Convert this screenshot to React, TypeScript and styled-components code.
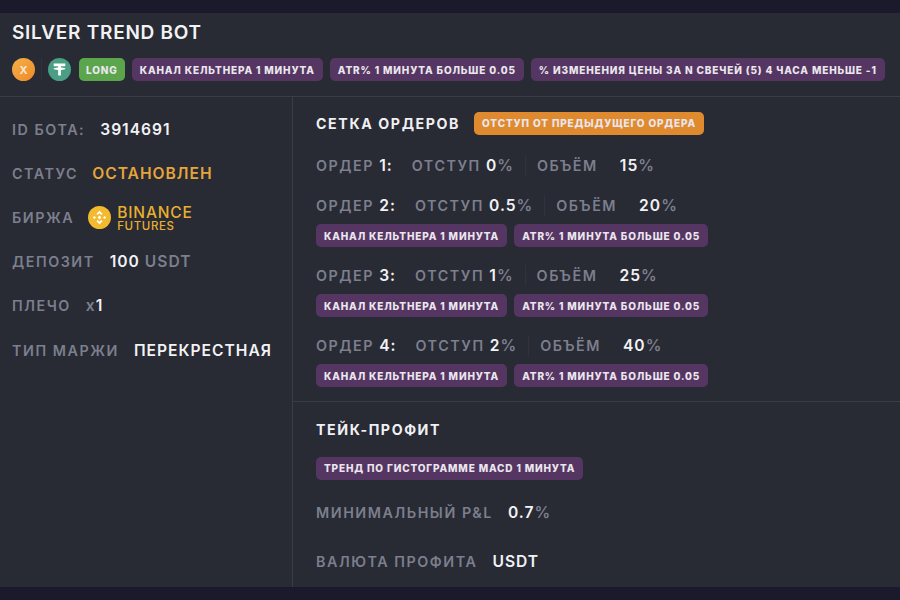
import React from "react";
import styled, { createGlobalStyle } from "styled-components";

const Global = createGlobalStyle`
  html, body { margin: 0; padding: 0; background: #1b1a2c; }
  body { font-family: Inter, "Noto Sans", sans-serif; }
`;

const Page = styled.div`
  width: 900px;
  height: 600px;
  box-sizing: border-box;
  padding: 13px 0 13px;
  overflow: hidden;
`;
const Card = styled.div`
  height: 574px;
  background: #282a34;
  display: flex;
  flex-direction: column;
`;
const Header = styled.div`
  height: 84px;
  box-sizing: border-box;
  padding: 9px 12px 0;
  border-bottom: 1px solid #3a3c47;
`;
const Title = styled.div`
  font-size: 19px;
  line-height: 22px;
  font-weight: 600;
  color: #f2f2f4;
  letter-spacing: 0.75px;
`;
const BadgeRow = styled.div`
  display: flex;
  align-items: center;
  margin-top: 14px;
`;
const Coin = styled.span<{ $bg: string }>`
  width: 23px;
  height: 23px;
  border-radius: 50%;
  background: ${(p) => p.$bg};
  display: flex;
  align-items: center;
  justify-content: center;
  color: #f7e6d0;
  font-size: 11px;
  font-weight: 700;
  flex: none;
`;
const VLine = styled.span`
  width: 1px;
  height: 23px;
  background: #30323d;
  margin: 0 6px;
  flex: none;
`;
const Tag = styled.span<{ $bg?: string }>`
  display: inline-flex;
  align-items: center;
  height: 23px;
  box-sizing: border-box;
  padding: 0 8px;
  border-radius: 5px;
  background: ${(p) => p.$bg ?? "#553662"};
  color: #ebe6ee;
  font-size: 10px;
  font-weight: 800;
  letter-spacing: 0.85px;
  white-space: nowrap;
  flex: none;
`;
const LongTag = styled(Tag)`
  padding: 0 7px;
`;
const HeaderTags = styled.div`
  display: flex;
  gap: 7px;
  margin-left: 8px;
`;
const OrangeTag = styled(Tag)`
  margin-left: 14px;
`;
const Body = styled.div`
  flex: 1;
  display: flex;
  min-height: 0;
`;
const Left = styled.div`
  width: 293px;
  box-sizing: border-box;
  border-right: 1px solid #3a3c47;
  padding: 21px 12px 0;
  flex: none;
`;
const LeftRow = styled.div<{ $h: number }>`
  height: ${(p) => p.$h}px;
  display: flex;
  align-items: center;
  white-space: nowrap;
`;
const Label = styled.span<{ $mr?: number }>`
  font-size: 14.3px;
  font-weight: 600;
  letter-spacing: 1.55px;
  color: #7c7f8d;
  margin-right: ${(p) => p.$mr ?? 0}px;
  white-space: nowrap;
`;
const Value = styled.span<{ $color?: string }>`
  font-size: 15.6px;
  font-weight: 600;
  letter-spacing: 1px;
  color: ${(p) => p.$color ?? "#f2f2f4"};
  white-space: nowrap;
`;
const Unit = styled.span`
  color: #7c7f8d;
  font-weight: 600;
`;
const Exchange = styled.span`
  display: flex;
  flex-direction: column;
  margin-left: 6px;
  padding-top: 4px;
  color: #e9b02f;
`;
const ExName = styled.span`
  font-size: 15.5px;
  line-height: 15px;
  font-weight: 500;
  letter-spacing: 0.85px;
`;
const ExSub = styled.span`
  font-size: 11.5px;
  line-height: 13px;
  font-weight: 500;
  letter-spacing: 0.6px;
`;
const Right = styled.div`
  flex: 1;
  display: flex;
  flex-direction: column;
`;
const GridSection = styled.div`
  height: 305px;
  box-sizing: border-box;
  padding: 14px 23px 0;
  border-bottom: 1px solid #3a3c47;
`;
const SectionHead = styled.div`
  display: flex;
  align-items: center;
  height: 24px;
`;
const SectionTitle = styled.span`
  font-size: 14.2px;
  font-weight: 700;
  letter-spacing: 1.6px;
  color: #f0f0f3;
  white-space: nowrap;
`;
const Order = styled.div<{ $mt: number }>`
  margin-top: ${(p) => p.$mt}px;
`;
const OrderLine = styled.div`
  display: flex;
  align-items: center;
  height: 24px;
`;
const Sep = styled.span`
  width: 1px;
  height: 21px;
  background: #30323d;
  margin: 0 11px;
  flex: none;
`;
const OrderTags = styled.div`
  display: flex;
  gap: 7px;
  margin-top: 7px;
`;
const TakeSection = styled.div`
  padding: 17px 23px 0;
`;
const MetaRow = styled.div<{ $mt: number }>`
  display: flex;
  align-items: center;
  height: 24px;
  margin-top: ${(p) => p.$mt}px;
`;

const Tether = () => (
  <svg width="15" height="15" viewBox="0 0 13 13" fill="#fff">
    <path d="M1.5 1.2h10v2.4H7.7v1.2c2.2.1 3.9.5 3.9 1.05s-1.7.95-3.9 1.05v4.9H5.3V6.9C3.1 6.8 1.4 6.4 1.4 5.85S3.1 4.9 5.3 4.8V3.6H1.5z" />
  </svg>
);

const BinanceLogo = () => (
  <svg width="23" height="23" viewBox="0 0 23 23">
    <circle cx="11.5" cy="11.5" r="11.5" fill="#f3ba2f" />
    <g fill="#fff">
      <path d="M11.5 4.8l3 3-1.2 1.2-1.8-1.8-1.8 1.8-1.2-1.2z" />
      <path d="M11.5 18.2l-3-3 1.2-1.2 1.8 1.8 1.8-1.8 1.2 1.2z" />
      <path d="M4.8 11.5l1.6-1.6 1.6 1.6-1.6 1.6z" />
      <path d="M15 11.5l1.6-1.6 1.6 1.6-1.6 1.6z" />
      <path d="M11.5 9.6l1.9 1.9-1.9 1.9-1.9-1.9z" />
    </g>
  </svg>
);

const orders = [
  { n: "1:", off: "0", vol: "15", tags: false, mt: 18 },
  { n: "2:", off: "0.5", vol: "20", tags: true, mt: 16 },
  { n: "3:", off: "1", vol: "25", tags: true, mt: 16 },
  { n: "4:", off: "2", vol: "40", tags: true, mt: 16 },
];

export default function App() {
  return (
    <Page>
      <Global />
      <Card>
        <Header>
          <Title>SILVER TREND BOT</Title>
          <BadgeRow>
            <Coin $bg="linear-gradient(135deg,#f5b04a,#ee8a26)">X</Coin>
            <VLine />
            <Coin $bg="#4a9e84"><Tether /></Coin>
            <HeaderTags>
              <LongTag $bg="#5ba64d">LONG</LongTag>
              <Tag>КАНАЛ КЕЛЬТНЕРА 1 МИНУТА</Tag>
              <Tag>ATR% 1 МИНУТА БОЛЬШЕ 0.05</Tag>
              <Tag>% ИЗМЕНЕНИЯ ЦЕНЫ ЗА N СВЕЧЕЙ (5) 4 ЧАСА МЕНЬШЕ -1</Tag>
            </HeaderTags>
          </BadgeRow>
        </Header>
        <Body>
          <Left>
            <LeftRow $h={22}>
              <Label $mr={15}>ID БОТА:</Label>
              <Value>3914691</Value>
            </LeftRow>
            <LeftRow $h={66}>
              <Label $mr={14}>СТАТУС</Label>
              <Value $color="#e5a53b">ОСТАНОВЛЕН</Value>
            </LeftRow>
            <LeftRow $h={22}>
              <Label $mr={14}>БИРЖА</Label>
              <BinanceLogo />
              <Exchange>
                <ExName>BINANCE</ExName>
                <ExSub>FUTURES</ExSub>
              </Exchange>
            </LeftRow>
            <LeftRow $h={66}>
              <Label $mr={15}>ДЕПОЗИТ</Label>
              <Value>100 <Unit>USDT</Unit></Value>
            </LeftRow>
            <LeftRow $h={22}>
              <Label $mr={15}>ПЛЕЧО</Label>
              <Value><Unit>x</Unit>1</Value>
            </LeftRow>
            <LeftRow $h={68}>
              <Label $mr={15}>ТИП МАРЖИ</Label>
              <Value>ПЕРЕКРЕСТНАЯ</Value>
            </LeftRow>
          </Left>
          <Right>
            <GridSection>
              <SectionHead>
                <SectionTitle>СЕТКА ОРДЕРОВ</SectionTitle>
                <OrangeTag $bg="#e08a2f">ОТСТУП ОТ ПРЕДЫДУЩЕГО ОРДЕРА</OrangeTag>
              </SectionHead>
              {orders.map((o) => (
                <Order key={o.n} $mt={o.mt}>
                  <OrderLine>
                    <Label $mr={19}>ОРДЕР <Value>{o.n}</Value></Label>
                    <Label>ОТСТУП <Value>{o.off}<Unit>%</Unit></Value></Label>
                    <Sep />
                    <Label $mr={22}>ОБЪЁМ</Label>
                    <Value>{o.vol}<Unit>%</Unit></Value>
                  </OrderLine>
                  {o.tags && (
                    <OrderTags>
                      <Tag>КАНАЛ КЕЛЬТНЕРА 1 МИНУТА</Tag>
                      <Tag>ATR% 1 МИНУТА БОЛЬШЕ 0.05</Tag>
                    </OrderTags>
                  )}
                </Order>
              ))}
            </GridSection>
            <TakeSection>
              <SectionTitle>ТЕЙК-ПРОФИТ</SectionTitle>
              <MetaRow $mt={17}>
                <Tag>ТРЕНД ПО ГИСТОГРАММЕ MACD 1 МИНУТА</Tag>
              </MetaRow>
              <MetaRow $mt={20}>
                <Label $mr={15}>МИНИМАЛЬНЫЙ P&amp;L</Label>
                <Value>0.7<Unit>%</Unit></Value>
              </MetaRow>
              <MetaRow $mt={25}>
                <Label $mr={15}>ВАЛЮТА ПРОФИТА</Label>
                <Value>USDT</Value>
              </MetaRow>
            </TakeSection>
          </Right>
        </Body>
      </Card>
    </Page>
  );
}
